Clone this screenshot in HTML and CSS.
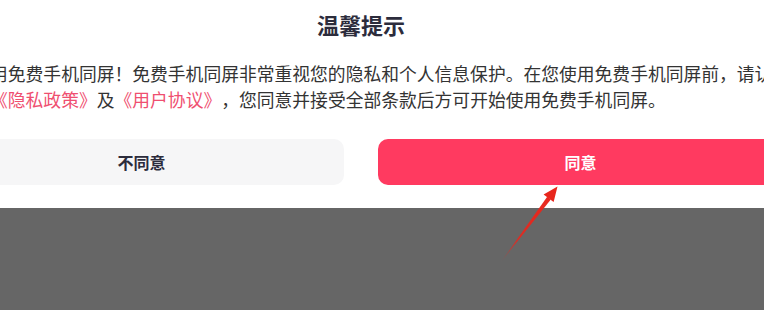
FILE: index.html
```html
<!DOCTYPE html>
<html lang="zh-CN">

<head>
    <meta charset="UTF-8">
    <meta name="viewport" content="width=device-width, initial-scale=1.0">
    <title>温馨提示</title>
    <link rel="stylesheet" href="styles.css">
</head>

<body>
    <div class="page">
        <div class="dialog">
            <h2 class="dialog-title">温馨提示</h2>
            <p class="dialog-text">用免费手机同屏！免费手机同屏非常重视您的隐私和个人信息保护。在您使用免费手机同屏前，请认真阅读<br><a class="link" href="#">《隐私政策》</a>及<a class="link" href="#">《用户协议》</a>，您同意并接受全部条款后方可开始使用免费手机同屏。</p>
            <div class="dialog-actions">
                <button class="btn btn-cancel">不同意</button>
                <button class="btn btn-ok">同意</button>
            </div>
        </div>
        <div class="backdrop"></div>

        <!-- annotation arrow -->
        <svg class="arrow" width="764" height="310" viewBox="0 0 764 310">
            <defs>
                <linearGradient id="fade" x1="502" y1="262" x2="552" y2="196" gradientUnits="userSpaceOnUse">
                    <stop offset="0" stop-color="#e8261c" stop-opacity="0.1" />
                    <stop offset="0.35" stop-color="#e8261c" stop-opacity="0.9" />
                    <stop offset="1" stop-color="#e8261c" />
                </linearGradient>
            </defs>
            <polygon points="501,262 547.2,196.8 550.8,199.6" fill="url(#fade)" />
            <polygon points="557.5,186.5 543.6,194.4 553.6,202" fill="#e8261c" />
        </svg>
    </div>
</body>

</html>
```

FILE: styles.css
```css
:root {
    --text-dark: #2c2c3c;
    --text-body: #333333;
    --pink: #ef4f70;
    --red: #ff3a60;
    --gray-btn: #f6f6f7;
}

html,
body {
    margin: 0;
    padding: 0;
    height: 100%;
    overflow: hidden;
}

body {
    font-family: "Noto Sans CJK SC", "Noto Sans", sans-serif;
    background-color: #fff;
}

.page {
    position: relative;
    display: flex;
    flex-direction: column;
    height: 310px;
    width: 764px;
}

.dialog {
    width: 844px;
    margin-left: -61px;
    background-color: #fff;
    padding-bottom: 23px;
}

.dialog-title {
    margin: 0;
    padding-top: 6px;
    font-size: 22px;
    line-height: 36px;
    font-weight: 700;
    text-align: center;
    color: var(--text-dark);
}

.dialog-text {
    margin: 18px 0 0 51px;
    font-size: 17.8px;
    line-height: 26px;
    color: var(--text-body);
    white-space: nowrap;
    text-spacing-trim: space-all;
}

.link {
    color: var(--pink);
    text-decoration: none;
}

.dialog-actions {
    display: flex;
    gap: 34px;
    margin-top: 27px;
}

.btn {
    flex: 1;
    height: 46px;
    border: 0;
    border-radius: 10px;
    font-family: inherit;
    font-size: 16px;
    font-weight: 700;
    cursor: pointer;
}

.btn-cancel {
    background-color: var(--gray-btn);
    color: var(--text-dark);
}

.btn-ok {
    background-color: var(--red);
    color: #fff;
}

.backdrop {
    flex: 1;
    background-color: #666666;
}

.arrow {
    position: absolute;
    left: 0;
    top: 0;
    pointer-events: none;
}
```
